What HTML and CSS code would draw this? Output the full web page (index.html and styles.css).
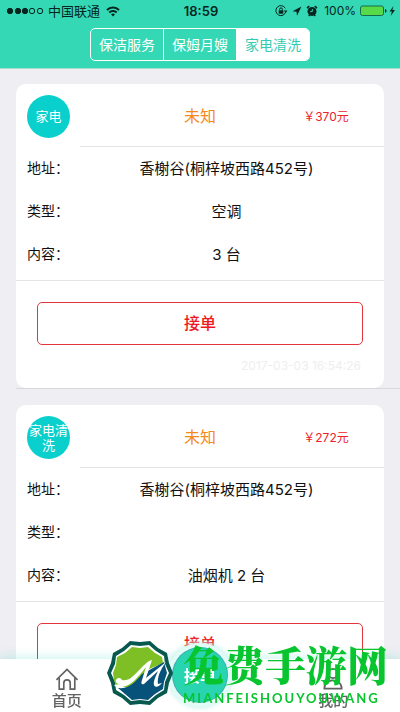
FILE: index.html
```
<!DOCTYPE html>
<html lang="zh-CN">
  <head>
    <meta charset="UTF-8" />
    <meta name="viewport" content="width=device-width, initial-scale=1" />
    <title>家电清洗</title>
    <link rel="stylesheet" href="styles.css">
  </head>
  <body>
    <header class="header">
      <div class="status-bar">
        <div class="status-left">
          <svg class="signal" width="38" height="8" viewBox="0 0 38 8">
            <g fill="#06251f" stroke="#06251f">
              <circle cx="4" cy="4" r="2.700" />
              <circle cx="12" cy="4" r="2.700" />
              <circle cx="19" cy="4" r="2.700" />
              <circle cx="26" cy="4" r="2.700" fill="none" />
              <circle cx="34" cy="4" r="2.700" fill="none" />
            </g>
          </svg>
          <span class="carrier">中国联通</span>
          <svg width="14" height="11" viewBox="0 0 14 11" fill="none" stroke="#06251f" stroke-width="2">
            <path d="M1 4C4.300 .6 9.700 .6 13 4M3.300 6.500c2-2 5.400-2 7.400 0" />
            <path d="M5 8.300c1.200-1.100 2.800-1.100 4 0L7 10.500z" fill="#06251f" stroke="none" />
          </svg>
        </div>
        <span class="clock">18:59</span>
        <div class="status-right">
          <svg width="13" height="12" viewBox="0 0 13 12" fill="none" stroke="#06251f">
            <path d="M10.800 6.500A5 5 0 1 1 10.300 3.300" />
            <path d="M8.800 5.500h3.600L10.700 8z" fill="#06251f" stroke="none" />
            <rect x="3.700" y="5.300" width="4.600" height="3.400" fill="#06251f" stroke="none" />
            <path d="M4.600 5.500V4.300a1.400 1.400 0 0 1 2.800 0v1.200" />
          </svg>
          <svg width="10" height="10" viewBox="0 0 10 10">
            <path d="M9.500 .5L.5 5.300l4 .4.5 4z" fill="#06251f" />
          </svg>
          <svg width="12" height="12" viewBox="0 0 12 12" fill="none" stroke="#06251f">
            <circle cx="6" cy="6.400" r="4.500" fill="#06251f" stroke="none" />
            <path d="M1 3.200L3.300 1.200M11 3.200L8.700 1.200M2.800 11l1-1.200M9.200 11l-1-1.200" stroke-width="1.600" />
            <path d="M6.300 4v2.600H4.200" stroke="#35d8b4" />
          </svg>
          <span class="percent">100%</span>
          <svg width="36" height="12" viewBox="0 0 36 12">
            <rect x=".5" y="1" width="23" height="9.500" rx="2" fill="#58d947" stroke="#176c4e" />
            <path d="M25 4c2 .4 2 3.300 0 3.700z" fill="#06251f" />
            <path d="M33.500 1L29.500 6.500h2.400L30.700 11l4.300-6h-2.600z" fill="#06251f" />
          </svg>
        </div>
      </div>
      <nav class="segments">
        <button class="segment" type="button">保洁服务</button>
        <button class="segment" type="button">保姆月嫂</button>
        <button class="segment active" type="button">家电清洗</button>
      </nav>
    </header>

    <main class="orders">
      <article class="order">
        <div class="order-head">
          <div class="badge">家电</div>
          <div class="summary">
            <span class="state">未知</span>
            <span class="price">￥370元</span>
          </div>
        </div>
        <dl class="details">
          <dt>地址：</dt>
          <dd>香榭谷(桐梓坡西路452号)</dd>
          <dt>类型：</dt>
          <dd>空调</dd>
          <dt>内容：</dt>
          <dd>3 台</dd>
        </dl>
        <div class="order-foot">
          <button class="accept" type="button">接单</button>
          <time class="time">2017-03-03 16:54:26</time>
        </div>
      </article>

      <article class="order">
        <div class="order-head">
          <div class="badge">家电清洗</div>
          <div class="summary">
            <span class="state">未知</span>
            <span class="price">￥272元</span>
          </div>
        </div>
        <dl class="details">
          <dt>地址：</dt>
          <dd>香榭谷(桐梓坡西路452号)</dd>
          <dt>类型：</dt>
          <dd></dd>
          <dt>内容：</dt>
          <dd>油烟机 2 台</dd>
        </dl>
        <div class="order-foot">
          <button class="accept" type="button">接单</button>
        </div>
      </article>
    </main>

    <nav class="tab-bar">
      <a class="tab" href="#home">
        <svg width="26" height="24" viewBox="0 0 26 24" fill="none" stroke="#626262" stroke-width="1.800">
          <path d="M1.500 13L13 1.500 24.500 13M4.500 11v12h5v-6.500a3.500 3.500 0 0 1 7 0V23h5V11" />
        </svg>
        首页
      </a>
      <div class="tab-center">
        <button class="grab" type="button">接单</button>
      </div>
      <a class="tab" href="#mine">
        <svg width="26" height="24" viewBox="0 0 26 24" fill="none" stroke="#626262" stroke-width="1.800">
          <circle cx="13" cy="6" r="5" />
          <path d="M3.500 22.500c0-12 19-12 19 0z" />
        </svg>
        我的
      </a>
    </nav>

    <!-- Logo situs -->
    <div class="watermark">
      <svg width="68" height="66" viewBox="0 0 68 66">
        <path d="M24 1l10 1 10-1 8 7 9 5 2 10 4 10-4 10-2 10-9 5-8 7-10-1-10 1-8-7-9-5-2-10-4-10 4-10 2-10 9-5z" fill="#07594f" />
        <path d="M25 5l9 1 9-1 7 6 8 5 1 8 4 9-4 9-1 8-8 5-7 6-9-1-9 1-7-6-8-5-1-8-4-9 4-9 1-8 8-5z" fill="#fff" />
        <path d="M26 7l8 1 8-1 7 6 7 4 1 6-16 7-16 18-15-2-2-6-1-7 3-8 1-8 8-4z" fill="#7dbf24" />
        <path d="M12 48c10 1 16-4 24-14l22-12 3 11-3 9-1 7-8 5-7 6-8-1-8 1-7-6z" fill="#07527b" />
        <path d="M10 40c2-3 5-2 6 0 10 2 15-10 27-19l3-1-6 18 20-16c-6 8-9 16-8 22l4-1c-3 4-7 5-8 2-1-4 2-9 4-14L38 44c-3 1-3-1-2-4l4-13C31 38 24 49 10 47l-2-2 6-1c-3 0-5-2-4-4z" fill="#fff" />
      </svg>
      <div class="watermark-text">
        <span class="watermark-name">免费手游网</span>
        <span class="watermark-latin">MIANFEISHOUYOUWANG</span>
      </div>
    </div>
  </body>
</html>
```
FILE: styles.css
```
* {
  box-sizing: border-box;
}

body {
  margin: 0;
  min-height: 100vh;
  background-color: #eeeef3;
  color: #111;
  font-family: Inter, "Noto Sans CJK SC", sans-serif;
  font-size: 15px;
}

button {
  padding: 0;
  border: 0;
  background: none;
  font: inherit;
  cursor: pointer;
}

/* Header */
.header {
  height: 69px;
  background-color: #35d8b4;
  border-bottom: 1px solid #a9dfd5;
}

.status-bar {
  display: grid;
  grid-template-columns: 1fr auto 1fr;
  align-items: center;
  height: 22px;
  padding: 0 4px 0 6px;
  color: #06251f;
  font-size: 12px;
}

.status-left,
.status-right {
  display: flex;
  align-items: center;
  gap: 4px;
  line-height: 20px;
}

.status-right {
  justify-content: flex-end;
}

.carrier {
  font-size: 13px;
  margin-right: 2px;
}

.clock {
  font-size: 13px;
  font-weight: 600;
}

.percent {
  margin-left: 2px;
}

.segments {
  display: flex;
  width: 55%;
  height: 33px;
  margin: 6px auto 0;
  border: 1px solid #fff;
  border-radius: 5px;
  overflow: hidden;
}

.segment {
  flex: 1;
  padding-bottom: 2px;
  color: #fff;
  font-size: 14px;
  white-space: nowrap;
}

.segment + .segment {
  border-left: 1px solid #fff;
}

.segment.active {
  background-color: #fff;
  color: #35cbb0;
}

/* Orders */
.orders {
  display: flex;
  flex-direction: column;
  gap: 16px;
  padding: 15px 0 0 16px;
}

.order {
  padding-right: 16px;
  border-bottom: 1px solid #d9d9dd;
}

.order:last-child {
  border-bottom: 0;
}

.order-head,
.details,
.order-foot {
  background-color: #fff;
}

.order-head {
  display: flex;
  height: 63px;
  padding-left: 11px;
  border-radius: 10px 10px 0 0;
}

.badge {
  display: flex;
  align-items: center;
  justify-content: center;
  width: 43px;
  height: 43px;
  margin: 11px 10px 0 0;
  border-radius: 50%;
  background-color: #09d0cc;
  color: #fff;
  font-size: 13px;
  line-height: 15px;
  text-align: center;
}

.summary {
  display: flex;
  flex: 1;
  align-items: center;
  padding-left: 52px;
  border-bottom: 1px solid #e4e4e7;
}

.state {
  flex: 1;
  color: #f58a1c;
  font-size: 16px;
  text-align: center;
}

.price {
  width: 116px;
  color: #ee2029;
  font-size: 12px;
  text-align: center;
}

.details {
  display: grid;
  grid-template-columns: 42px 1fr;
  grid-auto-rows: 43px;
  align-items: center;
  margin: 0;
  padding: 0 0 4px 11px;
  border-bottom: 1px solid #e4e4e7;
}

.details dt,
.details dd {
  padding-bottom: 3px;
}

.details dt {
  font-size: 14px;
  white-space: nowrap;
}

.details dd {
  margin: 0;
  text-align: center;
}

.order-foot {
  height: 107px;
  padding: 21px 21px 0;
  border-radius: 0 0 10px 10px;
}

.accept {
  width: 100%;
  height: 43px;
  padding-bottom: 3px;
  border: 1px solid #e3353d;
  border-radius: 5px;
  color: #f01820;
  font-size: 16px;
  font-weight: 500;
}

.time {
  display: block;
  padding: 13px 2px 0 0;
  color: #eeeeef;
  font-size: 12px;
  line-height: 16px;
  text-align: right;
}

/* Tab bar */
.tab-bar {
  position: fixed;
  right: 0;
  bottom: 0;
  left: 0;
  display: flex;
  height: 53px;
  background-color: #fff;
  box-shadow: 0 -2px 10px rgba(53, 216, 180, 0.25);
}

.tab,
.tab-center {
  display: flex;
  flex: 1;
  flex-direction: column;
  align-items: center;
}

.tab {
  padding-top: 9px;
  color: #626262;
  font-size: 15px;
  font-weight: 500;
  line-height: 22px;
  text-decoration: none;
}

.grab {
  width: 54px;
  height: 54px;
  margin-top: -11px;
  border-radius: 50%;
  background-color: #29d5b0;
  box-shadow: 0 0 0 1px #3aaeb5, 0 0 0 5px #e3fbf7, 0 0 5px 6px #c9f4ed;
  color: #fff;
  font-size: 16px;
  font-weight: 700;
}

/* Watermark */
.watermark {
  position: fixed;
  right: 12px;
  bottom: 6px;
  display: flex;
  align-items: flex-end;
  gap: 9px;
  pointer-events: none;
}

.watermark-text {
  display: flex;
  flex-direction: column;
  color: #08c52f;
}

.watermark-name {
  font-family: "Noto Serif CJK SC", "Noto Sans CJK SC", serif;
  font-size: 41px;
  font-weight: 900;
  line-height: 52px;
}

.watermark-latin {
  font-family: Lato, sans-serif;
  font-size: 13px;
  font-weight: 700;
  line-height: 16px;
  letter-spacing: 2px;
}
```
